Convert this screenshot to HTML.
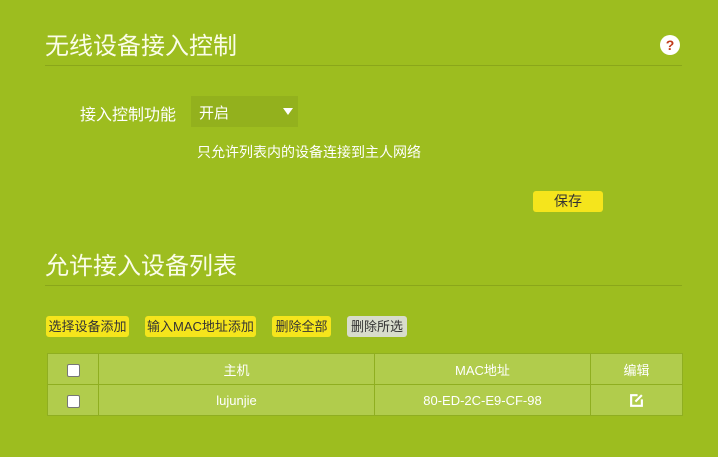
<!DOCTYPE html>
<html><head><meta charset="utf-8"><style>
body{margin:0;width:718px;height:457px;background:#9dbd1f;font-family:"Liberation Sans","Noto Sans CJK SC",sans-serif;position:relative;overflow:hidden;color:#fff}
.a{position:absolute}
h1{position:absolute;margin:0;font-weight:normal;font-size:24px;color:#fbfde8}
.line{position:absolute;left:45px;width:637px;height:1px;background:#8aa61a}
.btn{position:absolute;top:316px;height:21px;line-height:21px;font-size:13px;color:#333;background:#f5e51c;border-radius:3px;text-align:center}
table{position:absolute;left:47px;top:353px;width:636px;border-collapse:collapse;background:#b1cc4c;font-size:13px}
td{border:1px solid #8fae20;height:30px;text-align:center;padding:0;color:#fff}
.cb{display:inline-block;width:11px;height:11px;background:#fff;border:1px solid #777;border-radius:2px;vertical-align:middle}
</style></head><body>
<h1 style="left:45px;top:26px">无线设备接入控制</h1>
<div class="a" style="left:660px;top:35px;width:20px;height:20px;border-radius:50%;background:#fff;color:#c03a1a;font-weight:bold;font-size:14px;text-align:center;line-height:20px">?</div>
<div class="line" style="top:65px"></div>
<div class="a" style="left:80px;top:101px;font-size:16px">接入控制功能</div>
<div class="a" style="left:191px;top:96px;width:107px;height:31px;background:#93b11d"></div>
<div class="a" style="left:199px;top:102px;font-size:15px">开启</div>
<div class="a" style="left:283px;top:108px;width:0;height:0;border-left:5px solid transparent;border-right:5px solid transparent;border-top:7px solid #fff"></div>
<div class="a" style="left:197px;top:142px;font-size:14px">只允许列表内的设备连接到主人网络</div>
<div class="btn" style="left:533px;top:191px;width:70px;font-size:14px">保存</div>
<h1 style="left:45px;top:246px">允许接入设备列表</h1>
<div class="line" style="top:285px"></div>
<div class="btn" style="left:46px;width:83px">选择设备添加</div>
<div class="btn" style="left:145px;width:111px">输入MAC地址添加</div>
<div class="btn" style="left:272px;width:59px">删除全部</div>
<div class="btn" style="left:347px;width:60px;background:#d8dccc">删除所选</div>
<table>
<tr><td style="width:50px"><span class="cb"></span></td><td style="width:275px">主机</td><td style="width:215px">MAC地址</td><td>编辑</td></tr>
<tr><td><span class="cb"></span></td><td>lujunjie</td><td>80-ED-2C-E9-CF-98</td><td><svg width="15" height="15" viewBox="0 0 14 14" style="vertical-align:middle"><path d="M8 2H2v10h10V6" fill="none" stroke="#fff" stroke-width="2"/><path d="M6 8l6-6" stroke="#fff" stroke-width="2"/></svg></td></tr>
</table>
</body></html>
